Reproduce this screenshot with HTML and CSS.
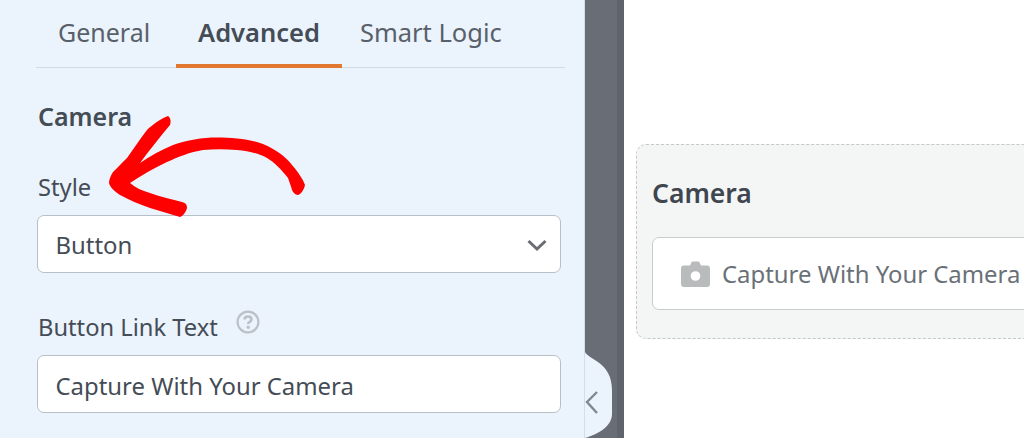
FILE: index.html
```html
<!DOCTYPE html>
<html lang="en">
<head>
<meta charset="utf-8">
<title>Camera field</title>
<link rel="stylesheet" href="styles.css">
</head>
<body>
<div class="app">
  <aside class="panel">
    <nav class="tabs">
      <span class="tab first">General</span>
      <span class="tab active">Advanced</span>
      <span class="tab">Smart Logic</span>
    </nav>
    <h2 class="section">Camera</h2>
    <label class="label">Style</label>
    <div class="field select">
      <span>Button</span>
      <svg class="chevron" width="22" height="14" viewBox="0 0 22 14"><path d="M2.5 3 L11 11 L19.5 3" fill="none" stroke="#6a6d72" stroke-width="3"/></svg>
    </div>
    <label class="label second">Button Link Text
      <svg class="help" width="24" height="24" viewBox="0 0 24 24"><circle cx="12" cy="12" r="10.4" fill="none" stroke="#bcc1c8" stroke-width="2.2"/><path d="M8.6 9.6c0-2 1.5-3.1 3.4-3.1s3.4 1.1 3.4 2.9c0 2.6-3.2 2.4-3.2 4.7" fill="none" stroke="#bcc1c8" stroke-width="2.6"/><circle cx="12.2" cy="17.2" r="1.7" fill="#bcc1c8"/></svg>
    </label>
    <div class="field text">Capture With Your Camera</div>
  </aside>
  <div class="divider">
    <div class="handle">
      <svg width="27" height="86" viewBox="0 0 27 86"><path d="M0 0 C4 8 27 10 27 38 L27 62 C27 74 14 82 0 86 Z" fill="#ebf3fc"/><path d="M12 43 L2 53 L12 64" transform="translate(0 -3)" fill="none" stroke="#7f8893" stroke-width="2.4"/></svg>
    </div>
  </div>
  <main class="preview">
    <section class="card">
      <h3 class="card-title">Camera</h3>
      <div class="capture">
        <svg width="29" height="26" viewBox="0 0 29 26"><path d="M3 4.5h6l1.4-3a1.5 1.5 0 0 1 1.4-1h5.4a1.5 1.5 0 0 1 1.4 1l1.4 3h6a3 3 0 0 1 3 3V23a3 3 0 0 1-3 3H3a3 3 0 0 1-3-3V7.500a3 3 0 0 1 3-3z" fill="#b9bcbd"/><circle cx="14.500" cy="15" r="4.800" fill="#fff"/></svg>
        <span>Capture With Your Camera</span>
      </div>
    </section>
  </main>
  <svg class="arrow" width="1024" height="438" viewBox="0 0 1024 438"><path fill="#fe0000" d="M168 116 C171 118 171 122 170 125 C161 136 150 149 140 163 C150 156 161 150 173 145 C187 140 202 137.500 217 137.500 C233 137.500 250 139 263 144 C277 150 286 157 292 165 C298 172 303 179 305 185 C304 190 301 194 298 195 C295 195 293 192 292 190 C291 186 289 181 288 178 C281 169 274 162 267 158 C258 153 248 151 237 150 C225 149 214 149 203 150 C190 152 178 157 167 162 C154 168 142 175 130 183 C136 188 143 191 150 193 C161 197 172 199 182 202 C186 203 187 205 187 208 C186 212 183 216 180 217 C170 214 160 211 150 208 C139 204 129 200 120 195 C114 191 110 187 109 183 C109 179 111 175 113 172 C118 167 122 163 127 158 C134 148 140 139 147 130 C152 125 160 119 168 116 Z"/></svg>
</div>
</body>
</html>
```
FILE: styles.css
```css
* { box-sizing: border-box; }
html, body { margin: 0; padding: 0; }
body {
  width: 1024px;
  height: 438px;
  overflow: hidden;
  background: #fff;
  font-family: "Noto Sans", "Open Sans", sans-serif;
  color: #444c56;
}
.app {
  position: relative;
  display: flex;
  width: 1024px;
  height: 438px;
  overflow: hidden;
}
.panel {
  flex: 0 0 585px;
  background: #ebf3fc;
  border-right: 1px solid #d6dde7;
  padding: 0 19px 0 36px;
}
.tabs {
  display: flex;
  height: 68px;
  border-bottom: 1px solid #d3dae3;
  font-size: 25.500px;
}
.tab {
  padding: 14px 18px 0;
  height: 68px;
  line-height: 36px;
  color: #58606a;
  white-space: nowrap;
}
.tab.first { width: 140px; padding-left: 22px; padding-right: 0; font-size: 25px; }
.tab.active {
  font-weight: 600;
  color: #444c56;
  border-bottom: 4px solid #e27730;
  padding: 14px 22px 0;
}
.section {
  margin: 32px 0 0 2px;
  font-size: 25px;
  line-height: 32px;
  font-weight: 600;
}
.label {
  display: block;
  margin: 40px 0 0 2px;
  font-size: 23.700px;
  line-height: 30px;
}
.label.second {
  margin-top: 39px;
  display: flex;
  align-items: center;
  gap: 18px;
}
.help { margin-top: -10px; }
.field {
  display: flex;
  align-items: center;
  justify-content: space-between;
  height: 58px;
  margin: 13px 4px 0 1px;
  padding: 1px 12px 0 17.500px;
  background: #fff;
  border: 1.500px solid #b9bfc7;
  border-radius: 7px;
  font-size: 23.900px;
  white-space: nowrap;
}
.field.text { padding-top: 3px; }
.divider {
  flex: 0 0 39px;
  background: #696d75;
  border-right: 7px solid #5f636b;
  position: relative;
}
.handle {
  position: absolute;
  left: 0;
  top: 352px;
  line-height: 0;
}
.preview {
  flex: 1;
  padding: 144px 0 0 12px;
  min-width: 0;
}
.card {
  width: 560px;
  height: 195px;
  background: #f4f6f6;
  border: 1px dashed #c5c8ca;
  border-radius: 10px;
  padding: 30px 15px 0;
}
.card-title {
  margin: 0;
  font-size: 26.500px;
  line-height: 36px;
  font-weight: 600;
  color: #3f464f;
}
.capture {
  display: flex;
  align-items: center;
  gap: 12px;
  height: 73px;
  margin-top: 26px;
  padding-left: 28px;
  background: #fff;
  border: 1px solid #c9cbcc;
  border-radius: 7px;
  font-size: 23.900px;
  color: #6a7078;
  white-space: nowrap;
}
.arrow {
  position: absolute;
  left: 0;
  top: 0;
  pointer-events: none;
}
```
